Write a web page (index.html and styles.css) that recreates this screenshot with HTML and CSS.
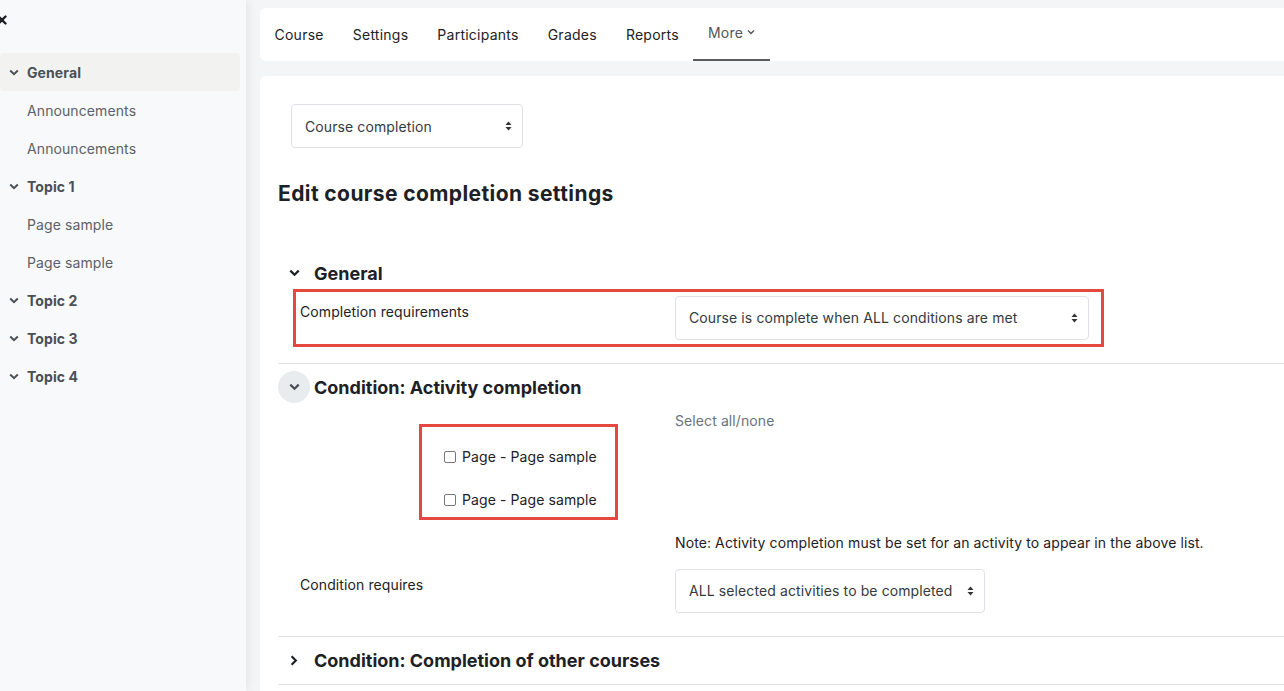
FILE: index.html
```html
<!DOCTYPE html>
<html lang="en">
<head>
    <meta charset="UTF-8">
    <meta name="viewport" content="width=device-width, initial-scale=1.0">
    <title>Course completion</title>
    <link rel="stylesheet" href="styles.css">
</head>
<body>
    <div class="page">
        <aside class="drawer">
            <div class="drawer-head">
                <svg class="close-icon" width="10" height="10" viewBox="0 0 10 10"><path d="M1.5 1.5 L8.5 8.5 M8.5 1.5 L1.5 8.5" stroke="#1d2125" stroke-width="2.4" stroke-linecap="round"/></svg>
            </div>
            <ul class="course-index">
                <li class="index-section active">
                    <svg class="index-chevron" width="10" height="7" viewBox="0 0 10 7"><path d="M1.2 1.5 L5 5.2 L8.8 1.5" fill="none" stroke="#495057" stroke-width="2"/></svg>
                    General
                </li>
                <li class="index-item">Announcements</li>
                <li class="index-item">Announcements</li>
                <li class="index-section">
                    <svg class="index-chevron" width="10" height="7" viewBox="0 0 10 7"><path d="M1.2 1.5 L5 5.2 L8.8 1.5" fill="none" stroke="#495057" stroke-width="2"/></svg>
                    Topic 1
                </li>
                <li class="index-item">Page sample</li>
                <li class="index-item">Page sample</li>
                <li class="index-section">
                    <svg class="index-chevron" width="10" height="7" viewBox="0 0 10 7"><path d="M1.2 1.5 L5 5.2 L8.8 1.5" fill="none" stroke="#495057" stroke-width="2"/></svg>
                    Topic 2
                </li>
                <li class="index-section">
                    <svg class="index-chevron" width="10" height="7" viewBox="0 0 10 7"><path d="M1.2 1.5 L5 5.2 L8.8 1.5" fill="none" stroke="#495057" stroke-width="2"/></svg>
                    Topic 3
                </li>
                <li class="index-section">
                    <svg class="index-chevron" width="10" height="7" viewBox="0 0 10 7"><path d="M1.2 1.5 L5 5.2 L8.8 1.5" fill="none" stroke="#495057" stroke-width="2"/></svg>
                    Topic 4
                </li>
            </ul>
        </aside>

        <div class="main">
            <nav class="secondary-nav">
                <a class="nav-link">Course</a>
                <a class="nav-link">Settings</a>
                <a class="nav-link">Participants</a>
                <a class="nav-link">Grades</a>
                <a class="nav-link">Reports</a>
                <a class="nav-link nav-more">More
                    <svg width="8" height="6" viewBox="0 0 8 6"><path d="M1 1.5 L4 4.5 L7 1.5" fill="none" stroke="#555" stroke-width="1.4"/></svg>
                </a>
            </nav>

            <div class="card">
                <div class="tertiary">
                    <div class="select select-nav">
                        <span>Course completion</span>
                        <svg class="select-arrow" width="7" height="10" viewBox="0 0 7 10"><path d="M0.5 4 L3.5 0.5 L6.5 4 Z M0.5 6 L3.5 9.5 L6.5 6 Z" fill="#333"/></svg>
                    </div>
                </div>

                <h2 class="page-title">Edit course completion settings</h2>

                <fieldset class="form-section">
                    <div class="section-head">
                        <span class="toggle">
                            <svg width="11" height="8" viewBox="0 0 11 8"><path d="M1.3 1.6 L5.5 5.8 L9.7 1.6" fill="none" stroke="#1d2125" stroke-width="2.2"/></svg>
                        </span>
                        <h3>General</h3>
                    </div>
                    <div class="form-row marked">
                        <div class="form-label">Completion requirements</div>
                        <div class="form-control">
                            <div class="select select-wide">
                                <span>Course is complete when ALL conditions are met</span>
                                <svg class="select-arrow" width="7" height="10" viewBox="0 0 7 10"><path d="M0.5 4 L3.5 0.5 L6.5 4 Z M0.5 6 L3.5 9.5 L6.5 6 Z" fill="#333"/></svg>
                            </div>
                        </div>
                    </div>
                </fieldset>

                <fieldset class="form-section">
                    <div class="section-head">
                        <span class="toggle toggle-round">
                            <svg width="11" height="8" viewBox="0 0 11 8"><path d="M1.3 1.6 L5.5 5.8 L9.7 1.6" fill="none" stroke="#495057" stroke-width="2.2"/></svg>
                        </span>
                        <h3>Condition: Activity completion</h3>
                    </div>
                    <div class="form-row activity-row">
                        <div class="form-label">
                            <div class="check-group">
                                <label class="check"><span class="check-box"></span>Page - Page sample</label>
                                <label class="check"><span class="check-box"></span>Page - Page sample</label>
                            </div>
                        </div>
                        <div class="form-control">
                            <span class="muted">Select all/none</span>
                        </div>
                    </div>
                    <div class="form-row note-row">
                        <div class="form-label"></div>
                        <div class="form-control">Note: Activity completion must be set for an activity to appear in the above list.</div>
                    </div>
                    <div class="form-row requires-row">
                        <div class="form-label">Condition requires</div>
                        <div class="form-control">
                            <div class="select select-mid">
                                <span>ALL selected activities to be completed</span>
                                <svg class="select-arrow" width="7" height="10" viewBox="0 0 7 10"><path d="M0.5 4 L3.5 0.5 L6.5 4 Z M0.5 6 L3.5 9.5 L6.5 6 Z" fill="#333"/></svg>
                            </div>
                        </div>
                    </div>
                </fieldset>

                <fieldset class="form-section">
                    <div class="section-head">
                        <span class="toggle">
                            <svg width="8" height="11" viewBox="0 0 8 11"><path d="M1.6 1.3 L5.8 5.5 L1.6 9.7" fill="none" stroke="#1d2125" stroke-width="2.2"/></svg>
                        </span>
                        <h3>Condition: Completion of other courses</h3>
                    </div>
                </fieldset>
            </div>
        </div>
    </div>
</body>
</html>
```

FILE: styles.css
```css
* {
    margin: 0;
    padding: 0;
    box-sizing: border-box;
}
body {
    font-family: Inter, "Noto Sans", sans-serif;
    font-size: 14px;
    letter-spacing: 0.1px;
    color: #1d2125;
    background-color: #f4f5f7;
    height: 691px;
    overflow: hidden;
}
.page {
    display: flex;
    height: 100vh;
}

/* course index drawer */
.drawer {
    width: 246px;
    flex-shrink: 0;
    background-color: #f8f9fa;
    box-shadow: 2px 0 10px rgba(0, 0, 0, 0.07);
    z-index: 1;
}
.drawer-head {
    height: 40px;
    display: flex;
    align-items: center;
}
.close-icon {
    margin-left: -3px;
}
.course-index {
    list-style: none;
    margin-top: 13px;
}
.course-index li {
    height: 38px;
    display: flex;
    align-items: center;
    margin-right: 6px;
    border-radius: 4px;
}
.index-section {
    padding-left: 9px;
    font-weight: 700;
    color: #495057;
}
.index-section.active {
    background-color: #f2f2f0;
}
.index-chevron {
    margin-right: 8px;
}
.index-item {
    padding-left: 27px;
    color: #5b6168;
}

/* main column */
.main {
    flex: 1;
    display: flex;
    flex-direction: column;
    padding: 8px 0 0 14px;
    margin-right: -30px;
}
.secondary-nav {
    height: 53px;
    flex-shrink: 0;
    background-color: white;
    border-radius: 6px;
    display: flex;
}
.nav-link {
    display: flex;
    align-items: center;
    gap: 4px;
    padding: 0 14.5px;
    letter-spacing: 0.25px;
    color: #1d2125;
}
.nav-more {
    color: #555;
    border-bottom: 2px solid #5b5b5b;
    padding-bottom: 3px;
}
.card {
    flex: 1;
    margin-top: 15px;
    background-color: white;
    border-radius: 6px 6px 0 0;
    padding: 28px 0 0 18px;
    overflow: hidden;
}
.tertiary {
    margin-left: 13px;
}
.select {
    height: 44px;
    border: 1px solid #dee2e6;
    border-radius: 4px;
    display: flex;
    align-items: center;
    justify-content: space-between;
    padding: 0 10px 0 13px;
    color: #343a40;
    background-color: white;
}
.select-nav {
    width: 232px;
}
.select-wide {
    width: 414px;
}
.select-mid {
    width: 310px;
}
.page-title {
    margin-top: 33px;
    font-size: 21px;
    font-weight: 700;
    line-height: 1.2;
    letter-spacing: 0.4px;
    color: #1d2125;
}

/* form sections */
.form-section {
    border: none;
    border-bottom: 1px solid #dee2e6;
    padding: 7px 0 8px;
}
.form-section:first-of-type {
    margin-top: 44px;
    padding-bottom: 16px;
}
.form-section:nth-of-type(2) {
    padding-bottom: 23px;
}
.section-head {
    display: flex;
    align-items: center;
    height: 32px;
}
.section-head h3 {
    font-size: 18px;
    font-weight: 700;
    letter-spacing: 0;
    color: #1d2125;
}
.toggle {
    width: 32px;
    height: 32px;
    margin-right: 4px;
    border-radius: 50%;
    display: flex;
    align-items: center;
    justify-content: center;
}
.toggle-round {
    background-color: #e9ecef;
}
.form-row {
    display: flex;
    padding-left: 22px;
}
.form-label {
    width: 375px;
    flex-shrink: 0;
    line-height: 20px;
    padding-top: 6px;
}
.form-control {
    line-height: 20px;
}
.form-row.marked {
    margin-left: 15px;
    padding: 4px 12px 4px 4px;
    border: 3px solid #e5483f;
    width: fit-content;
}
.activity-row {
    margin-top: 8px;
}
.activity-row .form-label {
    padding-top: 13px;
}
.muted {
    color: #6a737b;
}
.check-group {
    margin-left: 119px;
    width: 199px;
    border: 3px solid #e5483f;
    padding: 20px 0 7px 22px;
    display: flex;
    flex-direction: column;
    gap: 23px;
}
.check {
    display: flex;
    align-items: center;
    gap: 6px;
    color: #1d2125;
}
.check-box {
    width: 12px;
    height: 12px;
    border: 1px solid #767676;
    border-radius: 2px;
    background-color: white;
}
.note-row {
    margin-top: 13px;
}
.note-row .form-label {
    padding-top: 0;
}
.requires-row {
    margin-top: 16px;
}
```
